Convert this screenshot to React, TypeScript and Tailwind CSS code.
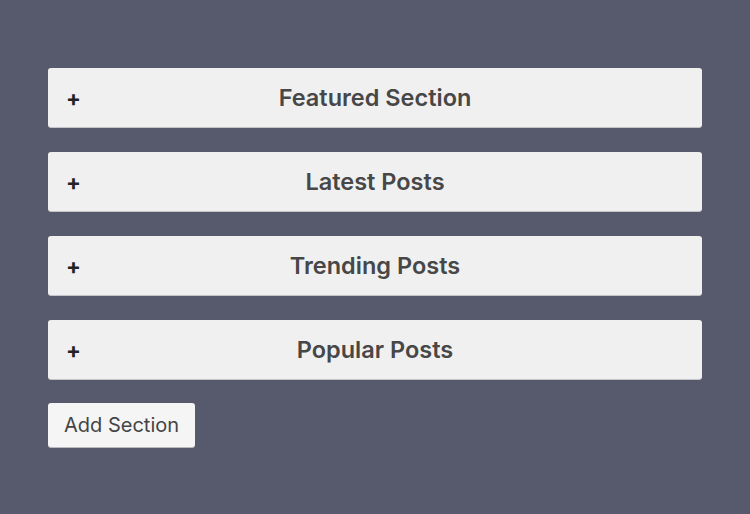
const SECTIONS = ["Featured Section", "Latest Posts", "Trending Posts", "Popular Posts"];

export default function App() {
  return (
    <div className="min-h-[514px] bg-[#575a6c] px-12 pt-[68px] pb-10" style={{ fontFamily: "Inter, 'Noto Sans', sans-serif" }}>
      <div className="flex flex-col gap-6">
        {SECTIONS.map((s) => (
          <div key={s}
            className="relative h-[59px] mb-px rounded-[3px] bg-[#f0f0f0] shadow-[0_1px_0_#c4c4c8] flex items-center justify-center">
            <span className="absolute left-[18px] top-1/2 -translate-y-1/2 text-[22px] font-bold leading-none text-[#222]">+</span>
            <span className="text-[23.5px] font-semibold text-[#474747]">{s}</span>
          </div>
        ))}
      </div>
      <button className="mt-[23px] h-[44px] px-4 rounded-[3px] bg-[#f5f5f5] shadow-[0_1px_0_#b9b9be] text-[20px] text-[#444]">
        Add Section
      </button>
    </div>
  );
}
